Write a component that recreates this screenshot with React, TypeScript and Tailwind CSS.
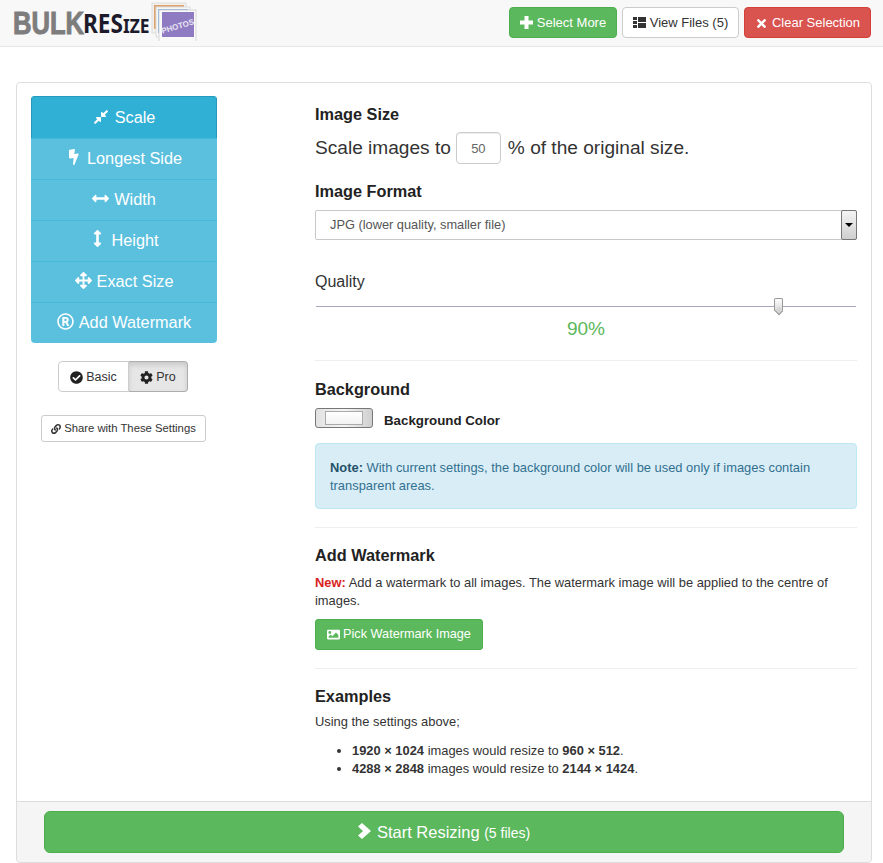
import type { ReactNode } from "react"
import {
  FaArrowsAlt,
  FaArrowsAltH,
  FaArrowsAltV,
  FaBolt,
  FaCheckCircle,
  FaCog,
  FaCompressAlt,
  FaImage,
  FaLink,
  FaRegRegistered,
  FaTimes,
} from "react-icons/fa"

const tabs = [
  { label: "Longest Side", icon: <FaBolt className="text-[16px] -rotate-[8deg] -mt-[3px]" /> },
  { label: "Width", icon: <FaArrowsAltH className="text-[17px] -mt-[2px]" /> },
  { label: "Height", icon: <FaArrowsAltV className="text-[17px] -mt-[3px]" /> },
  { label: "Exact Size", icon: <FaArrowsAlt className="text-[17px] -mt-[2px]" /> },
  { label: "Add Watermark", icon: <FaRegRegistered className="text-[17px] -mt-[2px]" /> },
]

function Logo() {
  return (
    <div className="flex items-center h-[46px] pl-[13px]">
      <span className="block w-[66px] mr-[4px] origin-left scale-x-[0.8] text-[32px] font-bold leading-none text-[#7d7d7d] whitespace-nowrap [-webkit-text-stroke:1px_#7d7d7d]">
        BULK
      </span>
      <span className="block w-[65px] origin-left scale-x-[0.87] text-[26px] font-bold leading-none text-[#1c1a2b] whitespace-nowrap font-['Noto_Sans',sans-serif]">
        RES<span className="text-[20px]">IZE</span>
      </span>
      <svg width="46" height="40" viewBox="0 0 46 40" className="ml-[3px] mt-[-4px]">
        <rect x="1" y="2" width="34" height="30" fill="#f4f1ec" stroke="#ddd" />
        <rect x="3" y="4" width="30" height="24" fill="#dca26c" />
        <rect x="5" y="6" width="34" height="30" fill="#f7f7f7" stroke="#ddd" />
        <rect x="7" y="8" width="30" height="24" fill="#6fa3d8" />
        <rect x="8" y="9" width="37" height="33" fill="#f9f9f9" stroke="#d8d8d8" />
        <rect x="11" y="11" width="32" height="25" fill="#8f7bc1" />
        <text
          x="27"
          y="28"
          textAnchor="middle"
          transform="rotate(-17 27 26)"
          className="fill-[#e8e4f4] text-[8px] font-bold"
        >
          PHOTOS
        </text>
      </svg>
    </div>
  )
}

function PlusIcon() {
  return (
    <svg width="13" height="13" viewBox="0 0 13 13" className="-mt-[1px]">
      <path d="M4.5 0h4v4.5H13v4H8.500V13h-4V8.500H0v-4h4.500z" fill="currentColor" />
    </svg>
  )
}

function FilesIcon() {
  return (
    <svg width="13" height="13" viewBox="0 0 13 13" className="-mt-[1px]">
      <path d="M0 1h4v3H0zM0 5h4v3H0zM0 9h4v3H0zM5 1h8v5H5zM5 7h8v5H5z" fill="currentColor" />
    </svg>
  )
}

function ChevronIcon() {
  return (
    <svg width="13" height="16" viewBox="0 0 13 16" className="-mt-[2px]">
      <path d="M4 0l9 8-9 8-4-3.500 5-4.500-5-4.500z" fill="currentColor" />
    </svg>
  )
}

function Heading({ children, className }: { children: ReactNode; className: string }) {
  return <h4 className={`text-[16.300px] font-bold leading-[18px] text-[#222] ${className}`}>{children}</h4>
}

export default function App() {
  return (
    <div className="w-[883px] h-[863px] overflow-hidden bg-white text-[#333] font-['Liberation_Sans',Arial,sans-serif]">
      <nav className="h-[47px] flex justify-between bg-[#f8f8f8] border-b border-[#e7e7e7]">
        <Logo />
        <div className="flex gap-[5px] pt-[7px] pr-[12px] text-[13px]">
          <button className="h-[31px] w-[108px] pt-[1px] flex items-center justify-center gap-[4px] rounded-[4px] bg-[#5cb85c] border border-[#4cae4c] text-white">
            <PlusIcon /> Select More
          </button>
          <button className="h-[31px] w-[117px] pt-[1px] flex items-center justify-center gap-[4px] rounded-[4px] bg-white border border-[#ccc] text-[#333]">
            <FilesIcon /> View Files (5)
          </button>
          <button className="h-[31px] w-[127px] pt-[1px] flex items-center justify-center gap-[4px] rounded-[4px] bg-[#d9534f] border border-[#d43f3a] text-white">
            <FaTimes className="text-[13px]" /> Clear Selection
          </button>
        </div>
      </nav>

      <div className="mx-[16px] mt-[35px] h-[781px] w-[856px] flex flex-col border border-[#ddd] rounded-[4px] bg-white">
        <div className="flex-1 flex pl-[14px] pt-[13px] pr-[14px]">
          <aside className="w-[186px] shrink-0 flex flex-col items-center">
            <div className="w-full rounded-[4px] overflow-hidden text-white text-[16.300px]">
              <div className="h-[42px] flex items-center justify-center gap-[6px] bg-[#31b0d5] border border-[#269abc] border-b-0">
                <FaCompressAlt className="text-[16px] -mt-[2px]" /> Scale
              </div>
              {tabs.map((tab) => (
                <div
                  key={tab.label}
                  className="h-[41px] pb-[2px] flex items-center justify-center gap-[5px] bg-[#5bc0de] border-t border-[#46b8da]"
                >
                  {tab.icon} {tab.label}
                </div>
              ))}
            </div>

            <div className="mt-[18px] -ml-[2px] flex h-[31px] text-[12.500px]">
              <button className="w-[71px] pt-[1px] flex items-center justify-center gap-[3px] bg-white border border-[#ccc] rounded-l-[4px]">
                <FaCheckCircle className="text-[13px] text-[#222]" /> Basic
              </button>
              <button className="w-[59px] pt-[1px] flex items-center justify-center gap-[3px] bg-[#e6e6e6] border border-l-0 border-[#adadad] rounded-r-[4px] shadow-[inset_0_3px_5px_rgba(0,0,0,0.125)]">
                <FaCog className="text-[13px] text-[#222]" /> Pro
              </button>
            </div>

            <button className="mt-[23px] -ml-[1px] h-[27px] w-[165px] flex items-center justify-center gap-[3px] bg-white border border-[#ccc] rounded-[3px] text-[11.300px]">
              <FaLink className="text-[10px]" /> Share with These Settings
            </button>
          </aside>

          <main className="w-[542px] ml-[98px]">
            <Heading className="mt-[9px]">Image Size</Heading>
            <div className="mt-[9px] flex items-center h-[32px] text-[19.100px]">
              Scale images to
              <input
                readOnly
                value="50"
                className="ml-[5px] mr-[7px] w-[45px] h-[32px] text-center text-[13px] text-[#666] border border-[#ccc] rounded-[4px] shadow-[inset_0_1px_1px_rgba(0,0,0,0.075)]"
              />
              % of the original size.
            </div>

            <Heading className="mt-[18px]">Image Format</Heading>
            <div className="mt-[10px] h-[30px] flex items-center justify-between pl-[14px] border border-[#c8c8c8] rounded-[2px] text-[12.800px] text-[#555]">
              JPG (lower quality, smaller file)
              <span className="w-[16px] h-[30px] -mr-[1px] flex items-center justify-center border border-[#777] rounded-[2px] bg-gradient-to-b from-[#f4f4f4] to-[#cfcfcf]">
                <span className="border-x-[4px] border-x-transparent border-t-[4px] border-t-black" />
              </span>
            </div>

            <div className="mt-[33px] text-[16px] leading-[18px]">Quality</div>
            <div className="relative mt-[15px] h-[1px] mx-[1px] bg-[#a9a7bc]">
              <span className="absolute left-[458px] top-[-8px] w-[9px] h-[13px] border border-[#999] border-b-0 rounded-t-[2px] bg-gradient-to-b from-white to-[#d6d6d6]" />
              <span className="absolute left-[459.500px] top-[2px] w-[6px] h-[6px] rotate-45 border-r border-b border-[#999] bg-[#d6d6d6]" />
            </div>
            <div className="mt-[12px] text-center text-[19px] leading-[20px] text-[#5cb85c]">90%</div>

            <hr className="mt-[21px] border-t border-[#eee]" />

            <Heading className="mt-[19px]">Background</Heading>
            <div className="mt-[10px] flex items-center h-[20px]">
              <div className="w-[58px] h-[20px] flex items-center justify-center rounded-[3px] border border-[#777] bg-gradient-to-r from-[#e2e2e2] via-[#f5f5f5] to-[#cfcfcf]">
                <span className="w-[38px] h-[14px] bg-gradient-to-b from-white to-[#f2f2f2] border border-[#aaa]" />
              </div>
              <span className="ml-[11px] mt-[5px] text-[13.300px] font-bold text-[#222]">Background Color</span>
            </div>

            <div className="mt-[15px] h-[66px] px-[14px] pt-[15px] bg-[#d9edf7] border border-[#bce8f1] rounded-[4px] text-[12.900px] leading-[18px] text-[#31708f]">
              <b className="text-[#245269]">Note:</b> With current settings, the background color will be used only if
              images contain transparent areas.
            </div>

            <hr className="mt-[18px] border-t border-[#eee]" />

            <Heading className="mt-[18px]">Add Watermark</Heading>
            <p className="mt-[10px] text-[12.900px] leading-[18px] text-[#333]">
              <b className="text-[#d9231c]">New:</b> Add a watermark to all images. The watermark image will be applied
              to the centre of images.
            </p>
            <button className="mt-[9px] h-[31px] w-[168px] flex items-center justify-center gap-[3px] bg-[#5cb85c] border border-[#4cae4c] rounded-[3px] text-[12.700px] text-white">
              <FaImage className="text-[13px]" /> Pick Watermark Image
            </button>

            <hr className="mt-[18px] border-t border-[#eee]" />

            <Heading className="mt-[18px]">Examples</Heading>
            <p className="mt-[8px] text-[12.900px] leading-[18px]">Using the settings above;</p>
            <ul className="mt-[11px] pl-[37px] list-disc text-[12.900px] leading-[18px]">
              <li>
                <b>1920 × 1024</b> images would resize to <b>960 × 512</b>.
              </li>
              <li>
                <b>4288 × 2848</b> images would resize to <b>2144 × 1424</b>.
              </li>
            </ul>
          </main>
        </div>

        <div className="h-[61px] shrink-0 bg-[#f5f5f5] border-t border-[#ddd] rounded-b-[4px] pt-[9px] pl-[27px]">
          <button className="h-[42px] w-[800px] flex items-center justify-center gap-[6px] bg-[#5cb85c] border border-[#4cae4c] rounded-[6px] text-white text-[16.500px]">
            <ChevronIcon />
            <span>
              Start Resizing <span className="text-[14px]">(5 files)</span>
            </span>
          </button>
        </div>
      </div>
    </div>
  )
}
